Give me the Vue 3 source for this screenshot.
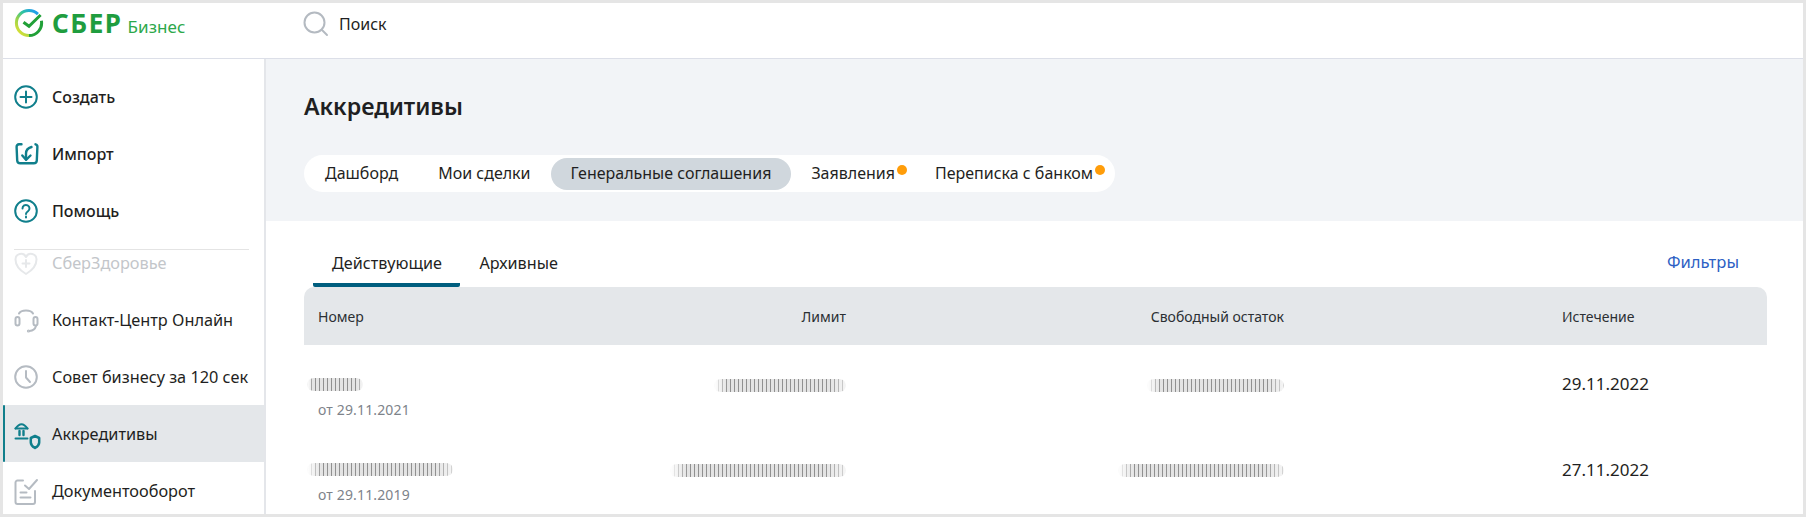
<script setup>
const pills = [
  { label: 'Дашборд' },
  { label: 'Мои сделки' },
  { label: 'Генеральные соглашения', active: true },
  { label: 'Заявления', dot: true },
  { label: 'Переписка с банком', dot: true },
]
const rows = [
  { numW: 56, date: 'от 29.11.2021', limW: 132, freeW: 137, exp: '29.11.2022' },
  { numW: 146, date: 'от 29.11.2019', limW: 176, freeW: 166, exp: '27.11.2022' },
]
</script>

<template>
  <div class="frame">
    <header class="top">
      <div class="logo">
        <svg class="logo-mark" width="30" height="30" viewBox="0 0 30 30" fill="none">
          <defs>
            <linearGradient id="ringA" x1="0" y1="1" x2="0.8" y2="0">
              <stop offset="0" stop-color="#f2e52e" />
              <stop offset="0.45" stop-color="#8fd14f" />
              <stop offset="0.7" stop-color="#2fc3a0" />
              <stop offset="1" stop-color="#1f9fe8" />
            </linearGradient>
          </defs>
          <path d="M23.900 6.100A12.600 12.600 0 0 0 15 2.400A12.600 12.600 0 0 0 2.400 15A12.600 12.600 0 0 0 15 27.600" stroke="url(#ringA)" stroke-width="3" />
          <path d="M15 27.600A12.600 12.600 0 0 0 27.400 12.800" stroke="#21a038" stroke-width="3" />
          <path d="M9.500 14.200L15 18.300L26.600 7" stroke="#21a038" stroke-width="3" />
        </svg>
        <span class="logo-name">СБЕР</span>
        <span class="logo-sub">Бизнес</span>
      </div>
      <div class="search">
        <svg width="26" height="26" viewBox="0 0 26 26" fill="none" stroke="#b4bac1" stroke-width="2">
          <circle cx="11.500" cy="11.500" r="10" />
          <path d="M19 19l5 5" stroke-linecap="round" />
        </svg>
        <span>Поиск</span>
      </div>
    </header>

    <div class="body">
      <aside class="side">
        <div class="actions">
          <div class="nav-row strong">
            <svg class="ico teal" viewBox="0 0 24 24"><circle cx="12" cy="12" r="10.800" /><path d="M12 6.500v11M6.500 12h11" /></svg>
            <span>Создать</span>
          </div>
          <div class="nav-row strong">
            <svg class="ico teal bold" viewBox="0 0 24 24">
              <path d="M7.500 2.300H5A2.500 2.500 0 0 0 2.600 5L3.200 18.500A3 3 0 0 0 6.200 21.300H19.800A3 3 0 0 0 22.800 18.500L23.400 5A2.500 2.500 0 0 0 21.500 2.300" />
              <path d="M17.500 5C14 6 12 8.500 12 11.500V17.500" /><path d="M8.300 13.500L12 17.800L16.500 13.500" />
            </svg>
            <span>Импорт</span>
          </div>
          <div class="nav-row strong">
            <svg class="ico teal" viewBox="0 0 24 24"><circle cx="12" cy="12" r="10.800" /><path d="M8.500 9.500a3.500 3.500 0 1 1 5.500 2.800c-1.300.9-2 1.500-2 2.700" /><path d="M12 17.600v.8" /></svg>
            <span>Помощь</span>
          </div>
        </div>
        <div class="divider"></div>
        <div class="list">
          <div class="nav-row faded">
            <svg class="ico pale" viewBox="0 0 24 24"><path d="M12 23C6 19.500 1.500 15 1.500 8.500A5.500 5.500 0 0 1 12 6a5.500 5.500 0 0 1 10.500 2.500C22.500 15 18 19.500 12 23z" /><path d="M12 9v7M8.500 12.500h7" /></svg>
            <span>СберЗдоровье</span>
          </div>
          <div class="nav-row">
            <svg class="ico gray" viewBox="0 0 24 24">
              <rect x="1.500" y="9" width="4" height="8.500" rx="2" /><rect x="19.500" y="9" width="4" height="8.500" rx="2" />
              <path d="M5 5.500C7 1.500 17 1.500 19 5.500" /><path d="M22 18c-.8 3-3.500 4.700-6.500 5" /><circle cx="14.500" cy="23" r=".6" />
            </svg>
            <span>Контакт-Центр Онлайн</span>
          </div>
          <div class="nav-row">
            <svg class="ico gray" viewBox="0 0 24 24"><circle cx="12" cy="12" r="10.800" /><path d="M12 6v6.500l4 4.500" /></svg>
            <span>Совет бизнесу за 120 сек</span>
          </div>
          <div class="nav-row current">
            <svg class="ico teal" viewBox="0 0 24 24">
              <path d="M1.500 6.500Q7.500 -2 13.500 6.500" /><path d="M1.500 6.500h12" /><path d="M5.500 9v4M9.500 9v4" stroke-width="2.400" /><path d="M1.500 16.500h12" />
              <path d="M16.800 16l4.200-2 4.200 2v4.500c0 2.600-2.100 4.300-4.200 5.500-2.100-1.200-4.200-2.900-4.200-5.500z" stroke-width="2.500" />
            </svg>
            <span>Аккредитивы</span>
          </div>
          <div class="nav-row">
            <svg class="ico gray" viewBox="0 0 24 24">
              <path d="M9 1.500H3.500a2 2 0 0 0-2 2v19.500a2 2 0 0 0 2 2H19a2 2 0 0 0 2-2V12" />
              <path d="M11 6.500l4 3.500L23 1" /><path d="M6.500 13.500h6M6.500 18.500h10" />
            </svg>
            <span>Документооборот</span>
          </div>
        </div>
      </aside>

      <main class="main">
        <section class="hero">
          <h1>Аккредитивы</h1>
          <nav class="pills">
            <span v-for="p in pills" :key="p.label" class="pill" :class="{ on: p.active, dotted: p.dot }">
              {{ p.label }}<i v-if="p.dot" class="dot"></i>
            </span>
          </nav>
        </section>
        <section class="content">
          <div class="tabbar">
            <div class="tabs">
              <span class="tab on">Действующие</span>
              <span class="tab">Архивные</span>
            </div>
            <a class="filters">Фильтры</a>
          </div>
          <div class="grid head">
            <div>Номер</div>
            <div class="r">Лимит</div>
            <div class="r">Свободный остаток</div>
            <div class="exp">Истечение</div>
          </div>
          <div v-for="(row, i) in rows" :key="i" class="grid row">
            <div class="num">
              <div class="smear n" :style="{ width: row.numW + 'px' }"></div>
              <div class="since">{{ row.date }}</div>
            </div>
            <div class="r"><div class="smear" :style="{ width: row.limW + 'px' }"></div></div>
            <div class="r"><div class="smear" :style="{ width: row.freeW + 'px' }"></div></div>
            <div class="exp val">{{ row.exp }}</div>
          </div>
        </section>
      </main>
    </div>
  </div>
</template>

<style>
html, body { margin: 0; background: #e5e5e5; }
</style>

<style scoped>
.frame {
  box-sizing: border-box;
  width: 1806px;
  height: 517px;
  padding: 3px;
  background: #e5e5e5;
  font-family: "Noto Sans", "Open Sans", sans-serif;
  color: #1f1f22;
  font-size: 16.3px;
}
.top {
  height: 55px;
  background: #fff;
  border-bottom: 1px solid #dcdfe8;
  display: flex;
  align-items: flex-start;
}
.logo {
  width: 300px;
  display: flex;
  align-items: baseline;
  position: relative;
  padding-left: 49px;
  box-sizing: border-box;
  height: 40px;
}
.logo-mark { position: absolute; left: 11px; top: 5px; }
.logo-name { font: 700 26px/40px "Noto Sans", sans-serif; color: #1f9d3f; letter-spacing: 1.5px; }
.logo-sub { margin-left: 5px; font-size: 17px; color: #2da84b; letter-spacing: .1px; }
.search { display: flex; align-items: center; gap: 10px; height: 38px; margin-top: 2px; font-size: 16px; }
.body {
  height: 455px;
  display: flex;
  overflow: hidden;
}
.side {
  width: 261px;
  flex: none;
  background: #fff;
  border-right: 2px solid #e4e6ea;
}
.actions { padding-top: 9px; }
.divider { height: 1px; background: #e4e4e4; margin: 10px 15px 0 11px; }
.list { height: 264px; overflow: hidden; }
.list .nav-row:first-child { margin-top: -16px; }
.nav-row {
  height: 57px;
  display: flex;
  align-items: center;
  padding-left: 11px;
  gap: 14px;
  box-sizing: border-box;
  white-space: nowrap;
}
.strong { font-weight: 500; font-size: 16px; }
.faded { color: #c3c6ca; }
.current { background: #e4e7ea; position: relative; }
.current::before {
  content: "";
  position: absolute;
  left: 0;
  top: 0;
  bottom: 0;
  width: 2px;
  background: #107f8c;
  border-radius: 1px;
}
.ico { width: 24px; height: 24px; flex: none; fill: none; stroke-width: 2; stroke-linecap: round; stroke-linejoin: round; overflow: visible; }
.bold { stroke-width: 2.4; }
.teal { stroke: #107f8c; }
.gray { stroke: #b5bbc2; }
.pale { stroke: #e6e8ea; }
.main { flex: 1; min-width: 0; background: #fff; }
.hero {
  height: 162px;
  box-sizing: border-box;
  background: #f2f4f7;
  padding: 0 0 0 38px;
  overflow: hidden;
}
h1 { margin: 30px 0 0; font-size: 23.2px; line-height: 34px; font-weight: 600; }
.pills {
  display: inline-flex;
  align-items: center;
  margin-top: 32px;
  height: 37px;
  padding: 0 2px 0 1px;
  background: #fff;
  border-radius: 19px;
}
.pill {
  position: relative;
  height: 32px;
  line-height: 31px;
  padding: 0 20px;
  border-radius: 16px;
  white-space: nowrap;
  font-size: 16px;
}
.pill.on { background: #d0d7dd; }
.dot {
  position: absolute;
  right: 8px;
  top: 7px;
  width: 10px;
  height: 10px;
  border-radius: 50%;
  background: #ff9d0a;
}
.content { padding: 0 36px 0 38px; }
.tabbar {
  height: 66px;
  display: flex;
  justify-content: space-between;
  align-items: flex-end;
}
.tabs { display: flex; padding-left: 9px; font-size: 16.2px; }
.tab {
  height: 66px;
  line-height: 84px;
  padding: 0 18.500px 0 19px;
  box-sizing: border-box;
  white-space: nowrap;
}
.tab.on { border-bottom: 4px solid #005e7f; border-radius: 2px; }
.filters { color: #2d5fc4; align-self: flex-end; margin-right: 28px; line-height: 24px; padding-bottom: 13px; font-size: 16.6px; }
.grid {
  display: grid;
  grid-template-columns: 250px 278px 438px 1fr;
  padding-left: 14px;
}
.r { text-align: right; display: flex; justify-content: flex-end; }
.exp { padding-left: 278px; }
.head {
  height: 58px;
  align-items: center;
  background: #e4e7ea;
  border-radius: 10px 10px 0 0;
  font-size: 14px;
  color: #2b2f33;
}
.row { height: 85px; align-items: flex-start; }
.val { line-height: 26px; padding-top: 26px; font-size: 17px; }
.row + .row .val { padding-top: 27px; }
.num { padding-top: 33px; }
.row .r { padding-top: 34px; }
.smear {
  height: 13px;
  border-radius: 6px;
  background:
    repeating-linear-gradient(90deg, rgba(70,70,70,.6) 0 1.5px, rgba(205,205,205,.55) 1.5px 4px);
  -webkit-mask-image: linear-gradient(90deg, transparent 0, #000 10%, #000 88%, rgba(0,0,0,.35) 100%);
  mask-image: linear-gradient(90deg, transparent 0, #000 10%, #000 88%, rgba(0,0,0,.35) 100%);
  filter: blur(.4px);
}
.smear.n { margin-left: -11px; }
.since { margin-top: 9px; font-size: 14px; letter-spacing: .15px; line-height: 20px; color: #7d838a; }
</style>
